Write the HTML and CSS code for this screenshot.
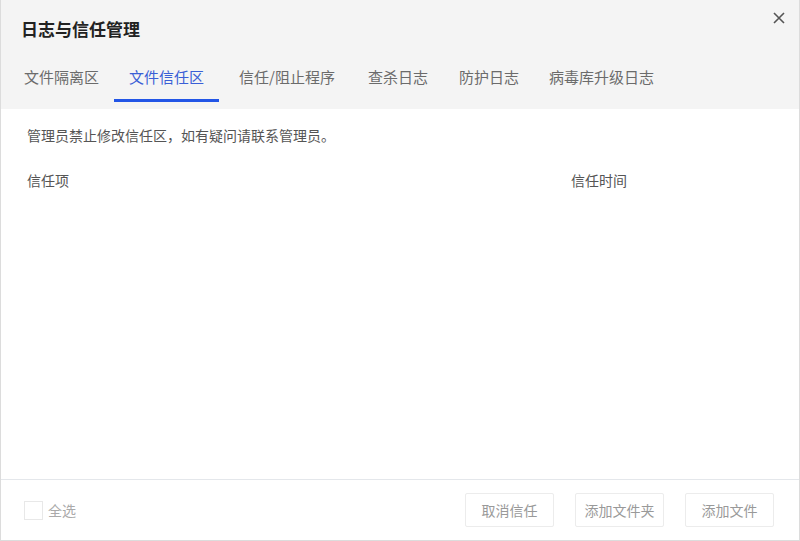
FILE: index.html
```html
<!DOCTYPE html>
<html lang="zh-CN">
<head>
    <meta charset="UTF-8">
    <title>日志与信任管理</title>
    <link rel="stylesheet" href="styles.css">
</head>
<body>

<div class="dialog">
    <div class="head">
        <div class="head-top">
            <span class="title">日志与信任管理</span>
            <span class="close">
                <svg width="12" height="12" viewBox="0 0 12 12"><path d="M1 1L11 11M11 1L1 11" stroke="#555" stroke-width="1.6" fill="none"/></svg>
            </span>
        </div>
        <!-- 标签页 -->
        <div class="tabs">
            <span class="tab">文件隔离区</span>
            <span class="tab active">文件信任区</span>
            <span class="tab">信任/阻止程序</span>
            <span class="tab">查杀日志</span>
            <span class="tab">防护日志</span>
            <span class="tab">病毒库升级日志</span>
        </div>
    </div>

    <div class="content">
        <p class="notice">管理员禁止修改信任区，如有疑问请联系管理员。</p>
        <div class="cols">
            <span>信任项</span>
            <span>信任时间</span>
        </div>
    </div>

    <div class="footer">
        <label class="check-all"><span class="box"></span>全选</label>
        <div class="actions">
            <button class="btn">取消信任</button>
            <button class="btn">添加文件夹</button>
            <button class="btn">添加文件</button>
        </div>
    </div>
</div>

</body>
</html>
```

FILE: styles.css
```css
body {
    margin: 0;
    font-family: "Noto Sans CJK SC", "Liberation Sans", sans-serif;
    background-color: #fff;
}
.dialog {
    width: 800px;
    height: 541px;
    box-sizing: border-box;
    border: 1px solid #dcdcdc;
    border-top: none;
    display: flex;
    flex-direction: column;
}
.head {
    background-color: #f4f4f4;
    padding: 17px 14px 7px 0;
}
.head-top {
    display: flex;
    justify-content: space-between;
    align-items: flex-start;
    padding-left: 20px;
}
.title {
    font-size: 17px;
    line-height: 24px;
    font-weight: bold;
    color: #222;
}
.close {
    margin-top: -5px;
    width: 12px;
    height: 12px;
    display: flex;
}
.tabs {
    display: flex;
    margin-top: 26px;
    padding-left: 8px;
}
.tab {
    font-size: 15px;
    line-height: 20px;
    color: #6b6b6b;
    padding: 0 15px 12px;
    border-bottom: 3px solid transparent;
}
.tab:nth-child(3) {
    margin-left: 5px;
}
.tab:nth-child(4) {
    margin-left: 3px;
}
.tab:nth-child(5) {
    margin-left: 1px;
}
.tab.active {
    color: #3a5fd6;
    border-bottom-color: #2255e6;
}
.content {
    flex: 1;
    padding: 16px 26px 0;
}
.notice {
    margin: 0;
    font-size: 14px;
    line-height: 20px;
    color: #555;
}
.cols {
    display: grid;
    grid-template-columns: 544px 1fr;
    margin-top: 25px;
    font-size: 14px;
    line-height: 20px;
    color: #555;
}
.footer {
    border-top: 1px solid #e4e7eb;
    height: 60px;
    display: flex;
    align-items: center;
    justify-content: space-between;
    padding: 0 25px 0 23px;
}
.check-all {
    display: flex;
    align-items: center;
    font-size: 14px;
    color: #aaa;
}
.box {
    width: 17px;
    height: 17px;
    border: 1px solid #e8e8e8;
    margin-right: 5px;
}
.actions {
    display: flex;
    gap: 21px;
}
.btn {
    width: 89px;
    height: 34px;
    font-family: inherit;
    font-size: 14px;
    color: #999;
    background-color: #fff;
    border: 1px solid #ececec;
    border-radius: 2px;
    padding: 0;
}
```
